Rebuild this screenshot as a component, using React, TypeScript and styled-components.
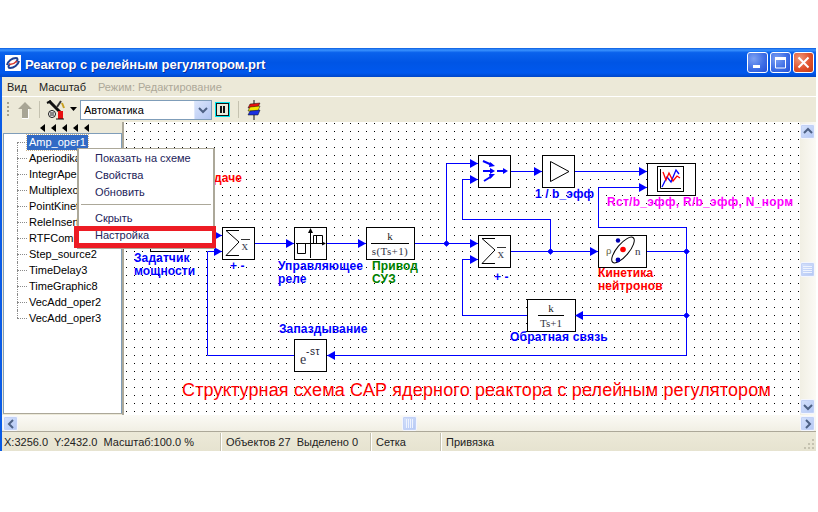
import React from "react";
import styled, { createGlobalStyle } from "styled-components";

const UI_FONT = `"Liberation Sans", Arial, sans-serif`;
const CANVAS_X = 124;
const CANVAS_Y = 122;

const GlobalStyle = createGlobalStyle`
  html, body {
    margin: 0;
    padding: 0;
    background: #fff;
    font-family: ${UI_FONT};
    font-size: 11px;
  }
`;

const Win = styled.div`
  width: 816px;
  margin-top: 48px;
  background: #ece9d8;
`;

const TitleBar = styled.div`
  height: 29px;
  display: flex;
  align-items: center;
  padding: 0 2px 0 5px;
  box-sizing: border-box;
  background: linear-gradient(
    180deg,
    #0a5ce0 0%,
    #3a93ff 7%,
    #0a62ec 16%,
    #0055e5 50%,
    #0058ee 86%,
    #0046c8 100%
  );
`;

const TitleText = styled.div`
  flex: 1;
  margin: 4px 0 0 4px;
  color: #fff;
  font-size: 13px;
  font-weight: bold;
  text-shadow: 1px 1px 0 #0a2f9c;
  white-space: nowrap;
`;

const CaptionButtons = styled.div`
  display: flex;
  gap: 2px;
  margin-top: -1px;
`;

const CaptionButton = styled.div<{ $close?: boolean }>`
  width: 21px;
  height: 21px;
  box-sizing: border-box;
  border: 1px solid #fff;
  border-radius: 3px;
  display: flex;
  align-items: center;
  justify-content: center;
  background: ${(p) =>
    p.$close
      ? "radial-gradient(circle at 30% 30%, #f0987a, #e0512c 55%, #c33a14)"
      : "radial-gradient(circle at 30% 30%, #7ea1f2, #3f6fe6 55%, #2450d6)"};
`;

const Frame = styled.div`
  border-left: 2px solid #0a5be6;
`;

const MenuBar = styled.div`
  height: 19px;
  display: flex;
  align-items: center;
  border-bottom: 1px solid #fff;
  padding-left: 5px;
  font-size: 11px;
  color: #222;
`;

const MenuLabel = styled.span<{ $muted?: boolean }>`
  margin-right: ${(p) => (p.$muted ? 0 : 12)}px;
  color: ${(p) => (p.$muted ? "#aca899" : "#222")};
  white-space: nowrap;
`;

const ToolBar = styled.div`
  height: 25px;
  display: flex;
  align-items: center;
  box-sizing: border-box;
`;

const Grip = styled.div`
  width: 2px;
  height: 15px;
  margin-left: 5px;
  background: repeating-linear-gradient(180deg, #a5a18d 0 2px, transparent 2px 4px);
`;

const Spacer = styled.span<{ $w: number }>`
  width: ${(p) => p.$w}px;
`;

const ToolSep = styled.div<{ $left: number; $right: number }>`
  width: 1px;
  height: 17px;
  background: #c5c2b0;
  margin-left: ${(p) => p.$left}px;
  margin-right: ${(p) => p.$right}px;
`;

const Combo = styled.div`
  width: 132px;
  height: 20px;
  box-sizing: border-box;
  border: 1px solid #7f9db9;
  background: #fff;
  display: flex;
  align-items: center;
  justify-content: space-between;
  padding-left: 3px;
  font-size: 11px;
  color: #000;
`;

const ComboButton = styled.div`
  width: 16px;
  height: 18px;
  display: flex;
  align-items: center;
  justify-content: center;
  background: linear-gradient(135deg, #dbe5fb, #b2c6f3);
  border-left: 1px solid #dfe8fb;
`;

const PauseButton = styled.div`
  width: 15px;
  height: 15px;
  box-sizing: border-box;
  margin-left: 3px;
  border: 1px solid #00e5ee;
  display: flex;
  align-items: center;
  justify-content: center;
  gap: 1px;
  outline: 1px solid #111;
  outline-offset: -2px;
  background: #ece9d8;
`;

const PauseBar = styled.span`
  width: 2px;
  height: 7px;
  background: #111;
`;

const Body = styled.div`
  position: relative;
  height: 293px;
  display: flex;
`;

const LeftPane = styled.div`
  width: 120px;
  display: flex;
  flex-direction: column;
`;

const Arrows = styled.div`
  height: 11px;
  display: flex;
  align-items: center;
  gap: 5px;
  padding-left: 38px;
`;

const TreeBox = styled.div`
  width: 119px;
  height: 281px;
  margin-left: 1px;
  box-sizing: border-box;
  border: 1px solid #7f9db9;
  border-bottom-color: #aca899;
  background: #fff;
  overflow: hidden;
`;

const TreeRow = styled.div<{ $first?: boolean; $last?: boolean }>`
  position: relative;
  height: 16px;
  display: flex;
  align-items: center;
  padding-left: 13px;
  &::before {
    content: "";
    position: absolute;
    left: 13px;
    top: ${(p) => (p.$first ? 8 : 0)}px;
    bottom: ${(p) => (p.$last ? 8 : 0)}px;
    border-left: 1px dotted #8a8a8a;
  }
`;

const TreeStub = styled.span`
  width: 10px;
  border-top: 1px dotted #8a8a8a;
`;

const TreeLabel = styled.span<{ $selected?: boolean }>`
  padding: 1px 2px;
  line-height: 13px;
  font-size: 11px;
  white-space: nowrap;
  color: ${(p) => (p.$selected ? "#fff" : "#000")};
  background: ${(p) => (p.$selected ? "#316ac5" : "transparent")};
  outline: ${(p) => (p.$selected ? "1px dotted #c9b28a" : "none")};
`;

const Splitter = styled.div`
  width: 2px;
  background: #aca899;
`;

const Canvas = styled.div`
  position: relative;
  width: 676px;
  height: 293px;
  background: #fff;
  overflow: hidden;
`;

const Diagram = styled.svg`
  display: block;
`;

const Label = styled.div<{ $x: number; $y: number; $color: string; $spacing?: number }>`
  position: absolute;
  left: ${(p) => p.$x - CANVAS_X}px;
  top: ${(p) => p.$y - CANVAS_Y}px;
  color: ${(p) => p.$color};
  font-size: 12px;
  font-weight: bold;
  letter-spacing: ${(p) => p.$spacing ?? 0.1}px;
  line-height: 13px;
  white-space: pre;
`;

const Caption = styled.div`
  position: absolute;
  left: ${182 - CANVAS_X}px;
  top: ${382 - CANVAS_Y}px;
  color: #ff0000;
  font-size: 18px;
  letter-spacing: 0.15px;
  line-height: 16px;
  white-space: pre;
`;

const VScroll = styled.div`
  width: 16px;
  height: 293px;
  box-sizing: border-box;
  padding: 2px 1px 1px 0;
  display: flex;
  flex-direction: column;
  justify-content: space-between;
  position: relative;
  background: linear-gradient(90deg, #f1efe4, #fbfaf5);
`;

const ScrollButton = styled.div`
  width: 15px;
  height: 15px;
  box-sizing: border-box;
  border: 1px solid #f4f6fe;
  border-radius: 2px;
  display: flex;
  align-items: center;
  justify-content: center;
  background: linear-gradient(135deg, #d5e1fb, #b3c7f5);
  box-shadow: inset 0 0 0 1px #c3d2f6;
`;

const VThumb = styled(ScrollButton)`
  position: absolute;
  left: 0;
  top: 140px;
`;

const HScroll = styled.div`
  position: relative;
  height: 16px;
  box-sizing: border-box;
  padding: 1px 1px 0 1px;
  display: flex;
  justify-content: space-between;
  background: linear-gradient(180deg, #fbfaf5, #f1efe4);
`;

const HThumb = styled(ScrollButton)`
  position: absolute;
  left: 400px;
  top: 1px;
`;

const StatusBar = styled.div`
  position: relative;
  height: 20px;
  box-sizing: border-box;
  border-top: 1px solid #aca899;
  display: flex;
  align-items: center;
  font-size: 11px;
  color: #222;
  background: linear-gradient(180deg, #ece9d8, #e6e3d0);
`;

const StatusCell = styled.div<{ $w: number; $first?: boolean }>`
  width: ${(p) => p.$w}px;
  height: 18px;
  line-height: 18px;
  box-sizing: border-box;
  padding-left: ${(p) => (p.$first ? 2 : 4)}px;
  border-left: ${(p) => (p.$first ? "none" : "1px solid #fff")};
  box-shadow: ${(p) => (p.$first ? "none" : "-1px 0 0 #c5c2b0")};
  white-space: pre;
`;

const ResizeGrip = styled.svg`
  position: absolute;
  right: 1px;
  bottom: 1px;
`;

const ContextMenu = styled.div`
  position: absolute;
  left: 75px;
  top: 26px;
  width: 138px;
  box-sizing: border-box;
  border: 2px solid #aca899;
  border-top-width: 1px;
  background: #fff;
  padding: 1px 0 3px;
  font-size: 11px;
  color: #23235a;
`;

const MenuItem = styled.div`
  height: 17px;
  line-height: 17px;
  padding-left: 16px;
  white-space: nowrap;
`;

const MenuSep = styled.div`
  height: 1px;
  margin: 3px 2px 5px;
  background: #aca899;
`;

const Highlight = styled.div`
  position: absolute;
  left: -5px;
  top: 77px;
  width: 142px;
  height: 22px;
  box-sizing: border-box;
  border: 5px solid #ed1c24;
  border-right-width: 4px;
`;

const BLUE = "#0000ff";
const SERIF = "Liberation Serif, serif";

// arrow head whose tip touches (x, y)
const Head = ({ x, y, dir = 1 }: { x: number; y: number; dir?: number }) => (
  <polygon points={`${x},${y} ${x - 8 * dir},${y - 4.5} ${x - 8 * dir},${y + 4.5}`} fill={BLUE} />
);

const Node = ({ x, y }: { x: number; y: number }) => (
  <polygon points={`${x - 3},${y} ${x},${y - 3} ${x + 3},${y} ${x},${y + 3}`} fill={BLUE} stroke={BLUE} strokeWidth="0.6" />
);

const Block = ({ x, y, w, h }: { x: number; y: number; w: number; h: number }) => (
  <rect x={x + 0.5} y={y + 0.5} width={w} height={h} fill="#fff" stroke="#000" />
);

const Sum = ({ x, y }: { x: number; y: number }) => (
  <g>
    <Block x={x} y={y} w={32} h={32} />
    <polyline
      points={`${x + 17},${y + 3.5} ${x + 4},${y + 3.5} ${x + 17},${y + 15} ${x + 4},${y + 28.5} ${x + 17},${y + 28.5}`}
      fill="none"
      stroke="#000"
    />
    <line x1={x + 19} y1={y + 12.5} x2={x + 28} y2={y + 12.5} stroke="#333" />
    <text x={x + 19.5} y={y + 23} fontSize="13" fontFamily={SERIF} fill="#445">
      x
    </text>
  </g>
);

const Wires = () => (
  <g fill="none" stroke={BLUE} strokeWidth="1">
    <path d="M183.5 235.5H222" />
    <path d="M222 251.5H207.5V355.5H294" />
    <path d="M255 243.5H294" />
    <path d="M327 243.5H366" />
    <path d="M415 243.5H478" />
    <path d="M446.5 243.5V163.5H478" />
    <path d="M478 179.5H462.5V219.5H550.5V251.5" />
    <path d="M511 171.5H542" />
    <path d="M575 171.5H647" />
    <path d="M647 187.5H598.5V227.5H686.5V355.5H327" />
    <path d="M511 251.5H598" />
    <path d="M647 251.5H686.5" />
    <path d="M686.5 315.5H575" />
    <path d="M527 315.5H462.5V259.5H478" />
  </g>
);

const Blocks = () => (
  <g>
    {/* step source, nearly all of it under the menu */}
    <Block x={150} y={219} w={33} h={32} />
    <Sum x={222} y={227} />
    <Sum x={478} y={235} />

    {/* relay */}
    <Block x={294} y={227} w={32} h={32} />
    <g fill="none" stroke="#000">
      <path d="M296 243.5H324M310.5 258V230" />
      <path d="M297.5 243.5V253.5H305.5V243.5" />
      <path d="M313.5 243.5V235.5H322.5V243.5" />
      <path d="M316.5 243.5V235.5" />
    </g>
    <polygon points="310.5,228 308,233 313,233" fill="#000" />
    <polygon points="326,243.5 322,241.5 322,245.5" fill="#000" />

    {/* drive */}
    <Block x={366} y={227} w={48} h={32} />
    <line x1={371} y1={243.5} x2={409} y2={243.5} stroke="#000" />
    <text x={390} y={240} textAnchor="middle" fontSize="11" fontFamily={SERIF} fill="#222">
      k
    </text>
    <text x={390} y={255} textAnchor="middle" fontSize="11" letterSpacing="0.4" fontFamily={SERIF} fill="#334">
      s(Ts+1)
    </text>

    {/* delay */}
    <Block x={294} y={339} w={32} h={32} />
    <text x={300} y={364} fontSize="14" fontFamily={SERIF} fill="#334">
      e
    </text>
    <text x={306} y={355} fontSize="10" letterSpacing="0.6" fontFamily="Liberation Sans, sans-serif" fill="#223">
      -sτ
    </text>

    {/* switch */}
    <Block x={478} y={155} w={32} h={32} />
    <g fill="none" stroke={BLUE} strokeWidth="2">
      <path d="M483 161l9 4M483 171h9M484 181l8 -5M497 171h8" />
    </g>
    <g fill={BLUE}>
      <polygon points="490,162 495,166 489,167" />
      <polygon points="490,168 495,171 490,174" />
      <polygon points="489,174 495,174 490,179" />
      <polygon points="503,168 508,171 503,174" />
    </g>

    {/* gain */}
    <Block x={542} y={155} w={32} h={32} />
    <polygon points="550.5,161.5 569,171.5 550.5,181.5" fill="#fff" stroke="#000" />

    {/* scope */}
    <Block x={647} y={163} w={48} h={32} />
    <rect x={657.5} y={166.5} width={26} height={25} fill="#fff" stroke="#000" />
    <path d="M660.5 169V188.5H681" fill="none" stroke="#000" />
    <path d="M662 187L667 177L671 182L676 170L679 174" fill="none" stroke={BLUE} strokeWidth="1.3" />
    <path d="M663 172L666 180L669 173L673 181L677 176L680 178" fill="none" stroke="#f00" strokeWidth="1.3" />

    {/* kinetics */}
    <Block x={598} y={235} w={48} h={32} />
    <ellipse cx={623} cy={250} rx={6} ry={16} transform="rotate(40 623 250)" fill="#fff" stroke="#000" />
    <circle cx={623} cy={249.5} r={2.8} fill="#f00" />
    <circle cx={618} cy={240.5} r={2.2} fill="#0000b0" />
    <circle cx={618} cy={260} r={2.4} fill="#0000b0" />
    <text x={606} y={254} fontSize="11" fontFamily={SERIF} fill="#664">
      ρ
    </text>
    <text x={635} y={255} fontSize="11" fontFamily={SERIF} fill="#334">
      n
    </text>

    {/* feedback */}
    <Block x={527} y={299} w={48} h={32} />
    <line x1={538} y1={315.5} x2={564} y2={315.5} stroke="#000" />
    <text x={551} y={312} textAnchor="middle" fontSize="11" fontFamily={SERIF} fill="#222">
      k
    </text>
    <text x={551} y={327} textAnchor="middle" fontSize="11" fontFamily={SERIF} fill="#334">
      Ts+1
    </text>
  </g>
);

const Heads = () => (
  <g>
    <Head x={222} y={235.5} />
    <Head x={222} y={251.5} />
    <Head x={294} y={243.5} />
    <Head x={366} y={243.5} />
    <Head x={478} y={163.5} />
    <Head x={478} y={179.5} />
    <Head x={478} y={243.5} />
    <Head x={478} y={259.5} />
    <Head x={542} y={171.5} />
    <Head x={647} y={171.5} />
    <Head x={647} y={187.5} />
    <Head x={598} y={251.5} />
    <Head x={327} y={355.5} dir={-1} />
    <Head x={575} y={315.5} dir={-1} />
    <Node x={446.5} y={243.5} />
    <Node x={550.5} y={251.5} />
    <Node x={686.5} y={251.5} />
    <Node x={686.5} y={315.5} />
  </g>
);

const treeItems = [
  "Amp_oper1",
  "Aperiodika1",
  "IntegrAper1",
  "Multiplexor1",
  "PointKinet1",
  "ReleInsert1",
  "RTFComm1",
  "Step_source2",
  "TimeDelay3",
  "TimeGraphic8",
  "VecAdd_oper2",
  "VecAdd_oper3",
];

const Chevron = ({ dir }: { dir: "up" | "down" | "left" | "right" }) => {
  const d = {
    up: "M2 7L6 3L10 7",
    down: "M2 4L6 8L10 4",
    left: "M8 2L4 6L8 10",
    right: "M4 2L8 6L4 10",
  }[dir];
  return (
    <svg width="12" height="12" viewBox="0 0 12 12">
      <path d={d} fill="none" stroke="#4d6185" strokeWidth="2" />
    </svg>
  );
};

const ThumbLines = ({ vertical }: { vertical?: boolean }) => (
  <svg width="9" height="9" viewBox="0 0 9 9">
    <path
      d={vertical ? "M0 1.5H9M0 3.5H9M0 5.5H9M0 7.5H9" : "M1.5 0V9M3.5 0V9M5.5 0V9M7.5 0V9"}
      stroke="#eef3fe"
    />
  </svg>
);

const AppLogo = () => (
  <svg width="16" height="16" viewBox="0 0 16 16">
    <rect width="16" height="16" fill="#fff" />
    <path d="M2 10C3 6 7 3 11 3C13 3 13 5 11 7" fill="none" stroke="#1c3f94" strokeWidth="2" />
    <path d="M14 6C13 10 9 13 5 13C3 13 3 11 5 9" fill="none" stroke="#1c3f94" strokeWidth="2" />
    <path d="M4 9C7 10 10 8 12 6" fill="none" stroke="#d8382a" strokeWidth="1.5" />
  </svg>
);

const ToolsIcon = () => (
  <svg width="20" height="20" viewBox="0 0 20 20">
    <path d="M3 1L14 12" stroke="#111" strokeWidth="3" />
    <path d="M1 3L5 1" stroke="#111" strokeWidth="2" />
    <path d="M15 1L11 7" stroke="#333" strokeWidth="2" />
    <path d="M16 3L18 8" stroke="#c8a020" strokeWidth="2" />
    <circle cx="6" cy="14" r="3.5" fill="#fff" stroke="#111" />
    <path d="M4 13h4M4 15h4" stroke="#111" />
    <rect x="12" y="11" width="5" height="8" fill="#e81010" />
    <path d="M10 19H18" stroke="#111" />
  </svg>
);

const UpArrowIcon = () => (
  <svg width="16" height="18" viewBox="0 0 16 18">
    <polygon points="8,1 15,8 11,8 11,17 5,17 5,8 1,8" fill="#a8a595" />
    <path d="M11.5 8V17.5H5" fill="none" stroke="#fff" />
  </svg>
);

const LayersIcon = () => (
  <svg width="14" height="20" viewBox="0 0 14 20">
    <line x1="7" y1="0" x2="7" y2="20" stroke="#111" />
    <polygon points="3,4 13,3 11,7 1,8" fill="#e81010" stroke="#111" strokeWidth="0.5" />
    <polygon points="3,7 13,6 11,11 1,11" fill="#f4e800" stroke="#111" strokeWidth="0.5" />
    <polygon points="3,11 13,10 11,15 1,15" fill="#1a30e0" stroke="#111" strokeWidth="0.5" />
  </svg>
);

const SmallCaret = () => (
  <svg width="8" height="5" viewBox="0 0 8 5">
    <polygon points="0,0 7,0 3.5,4" fill="#000" />
  </svg>
);

const Tick = () => (
  <svg width="6" height="8" viewBox="0 0 6 8">
    <polygon points="0,4 5,0 5,8" fill="#000" />
  </svg>
);

export default function App() {
  return (
    <>
      <GlobalStyle />
      <Win>
        <TitleBar>
          <AppLogo />
          <TitleText>Реактор с релейным регулятором.prt</TitleText>
          <CaptionButtons>
            <CaptionButton>
              <svg width="13" height="13" viewBox="0 0 13 13">
                <rect x="2" y="9" width="7" height="3" fill="#fff" />
              </svg>
            </CaptionButton>
            <CaptionButton>
              <svg width="13" height="13" viewBox="0 0 13 13">
                <path d="M1.5 3V12H11.5V3Z" fill="none" stroke="#fff" />
                <rect x="1" y="1" width="11" height="3" fill="#fff" />
              </svg>
            </CaptionButton>
            <CaptionButton $close>
              <svg width="13" height="13" viewBox="0 0 13 13">
                <path d="M1.5 1.5L11.5 11.5M11.5 1.5L1.5 11.5" stroke="#fff" strokeWidth="2" />
              </svg>
            </CaptionButton>
          </CaptionButtons>
        </TitleBar>
        <Frame>
          <MenuBar>
            <MenuLabel>Вид</MenuLabel>
            <MenuLabel>Масштаб</MenuLabel>
            <MenuLabel $muted>Режим: Редактирование</MenuLabel>
          </MenuBar>
          <ToolBar>
            <Grip />
            <Spacer $w={8} />
            <UpArrowIcon />
            <ToolSep $left={6} $right={6} />
            <ToolsIcon />
            <Spacer $w={4} />
            <SmallCaret />
            <Spacer $w={2} />
            <Combo>
              Автоматика
              <ComboButton>
                <Chevron dir="down" />
              </ComboButton>
            </Combo>
            <PauseButton>
              <PauseBar />
              <PauseBar />
            </PauseButton>
            <ToolSep $left={8} $right={8} />
            <LayersIcon />
          </ToolBar>
          <Body>
            <LeftPane>
              <Arrows>
                <Tick />
                <Tick />
                <Tick />
                <Tick />
                <Tick />
              </Arrows>
              <TreeBox>
                {treeItems.map((item, i) => (
                  <TreeRow key={item} $first={i === 0} $last={i === treeItems.length - 1}>
                    <TreeStub />
                    <TreeLabel $selected={i === 0}>{item}</TreeLabel>
                  </TreeRow>
                ))}
              </TreeBox>
            </LeftPane>
            <Splitter />
            <Canvas>
              <Diagram
                width="676"
                height="293"
                viewBox={`${CANVAS_X} ${CANVAS_Y} 676 293`}
              >
                <defs>
                  <pattern id="grid" width="8" height="8" patternUnits="userSpaceOnUse">
                    <rect x="6" y="3" width="1" height="1" fill="#000" />
                  </pattern>
                </defs>
                <rect x={CANVAS_X} y={CANVAS_Y} width="676" height="293" fill="url(#grid)" />
                <Wires />
                <Blocks />
                <Heads />
              </Diagram>
              <Label $x={214} $y={172} $color="#ff0000">даче</Label>
              <Label $x={134} $y={252} $color={BLUE}>{"Задатчик\nмощности"}</Label>
              <Label $x={230} $y={260} $color={BLUE}>+ -</Label>
              <Label $x={278} $y={260} $color={BLUE}>{"Управляющее\nреле"}</Label>
              <Label $x={372} $y={260} $color="#008000">{"Привод\nСУЗ"}</Label>
              <Label $x={279} $y={323} $color={BLUE}>Запаздывание</Label>
              <Label $x={535} $y={188} $color={BLUE}>1 / b_эфф</Label>
              <Label $x={607} $y={196} $color="#ff00ff" $spacing={0.28}>Rст/b_эфф, R/b_эфф, N_норм</Label>
              <Label $x={494} $y={271} $color={BLUE}>+ -</Label>
              <Label $x={598} $y={267} $color="#ff0000">{"Кинетика\nнейтронов"}</Label>
              <Label $x={510} $y={331} $color={BLUE} $spacing={0.2}>Обратная связь</Label>
              <Caption>Структурная схема САР ядерного реактора с релейным регулятором</Caption>
            </Canvas>
            <VScroll>
              <ScrollButton>
                <Chevron dir="up" />
              </ScrollButton>
              <VThumb>
                <ThumbLines vertical />
              </VThumb>
              <ScrollButton>
                <Chevron dir="down" />
              </ScrollButton>
            </VScroll>
            <ContextMenu>
              <MenuItem>Показать на схеме</MenuItem>
              <MenuItem>Свойства</MenuItem>
              <MenuItem>Обновить</MenuItem>
              <MenuSep />
              <MenuItem>Скрыть</MenuItem>
              <MenuItem>Настройка</MenuItem>
              <Highlight />
            </ContextMenu>
          </Body>
          <HScroll>
            <ScrollButton>
              <Chevron dir="left" />
            </ScrollButton>
            <HThumb>
              <ThumbLines />
            </HThumb>
            <ScrollButton>
              <Chevron dir="right" />
            </ScrollButton>
          </HScroll>
          <StatusBar>
            <StatusCell $first $w={219}>X:3256.0  Y:2432.0  Масштаб:100.0 %</StatusCell>
            <StatusCell $w={150}>Объектов 27  Выделено 0</StatusCell>
            <StatusCell $w={70}>Сетка</StatusCell>
            <StatusCell $w={100}>Привязка</StatusCell>
            <ResizeGrip width="12" height="12" viewBox="0 0 12 12">
              <path d="M9 1h2v2H9zM5 5h2v2H5zM9 5h2v2H9zM1 9h2v2H1zM5 9h2v2H5zM9 9h2v2H9z" fill="#c5c2b0" />
            </ResizeGrip>
          </StatusBar>
        </Frame>
      </Win>
    </>
  );
}
